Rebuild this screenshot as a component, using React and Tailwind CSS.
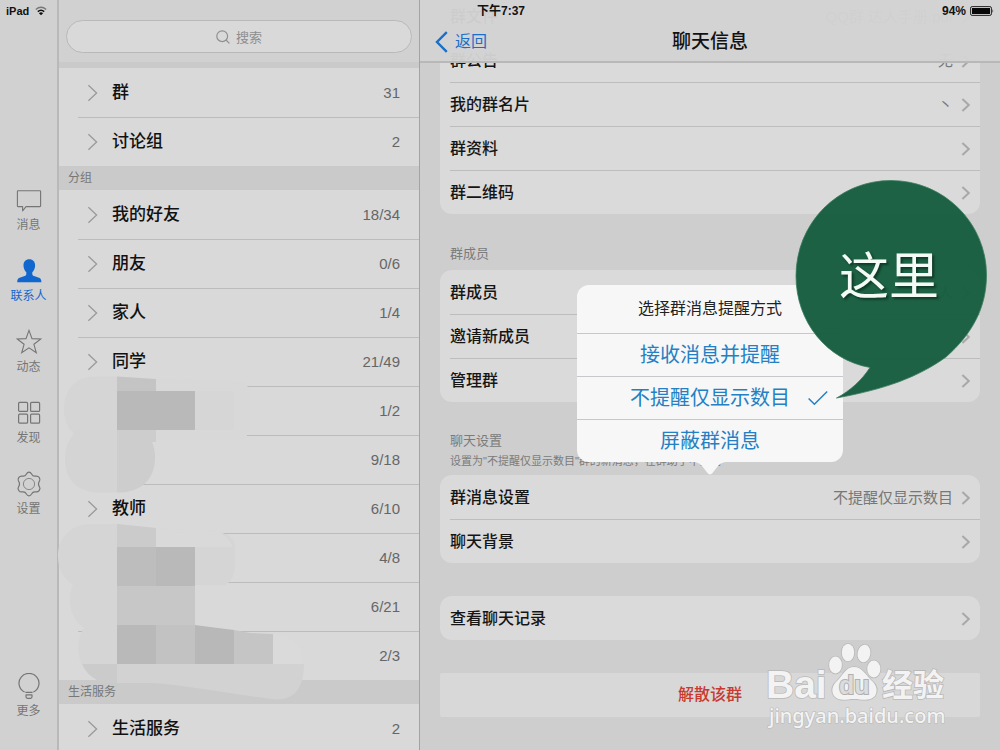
import React from "react";

const tabs = [
  { name: "消息", icon: MessageIcon },
  { name: "联系人", icon: PersonIcon, active: true },
  { name: "动态", icon: StarIcon },
  { name: "发现", icon: GridIcon },
  { name: "设置", icon: GearIcon },
];

const topGroups = [
  { name: "群", count: "31" },
  { name: "讨论组", count: "2" },
];

const friendGroups = [
  { name: "我的好友", count: "18/34" },
  { name: "朋友", count: "0/6" },
  { name: "家人", count: "1/4" },
  { name: "同学", count: "21/49" },
  { name: "", count: "1/2" },
  { name: "", count: "9/18" },
  { name: "教师", count: "6/10" },
  { name: "", count: "4/8" },
  { name: "", count: "6/21" },
  { name: "", count: "2/3" },
];

function MessageIcon() {
  return (
    <svg viewBox="0 0 26 26" className="size-[26px]" fill="none" stroke="currentColor" strokeWidth="1.1" strokeLinejoin="round">
      <path d="M2 3.8 H24 Q24.6 3.8 24.6 4.4 V19 Q24.6 19.6 24 19.6 H10 L6.6 23.8 V19.6 H2 Q1.4 19.6 1.4 19 V4.4 Q1.4 3.8 2 3.8 Z" />
    </svg>
  );
}

function PersonIcon() {
  return (
    <svg viewBox="0 0 26 26" className="size-[26px]" fill="currentColor">
      <path d="M13.3 1.2 C16.9 1.2 19.1 3.6 19.1 7.4 C19.1 10.2 18 12.6 16.3 14.3 V16 C16.3 17 16.9 17.6 18 18 L23 19.8 C24.6 20.4 25.4 21.8 25.4 24.2 H1.2 C1.2 21.8 2 20.4 3.6 19.8 L8.6 18 C9.7 17.6 10.3 17 10.3 16 V14.3 C8.6 12.6 7.5 10.2 7.5 7.4 C7.5 3.6 9.7 1.2 13.3 1.2 Z" />
    </svg>
  );
}

function StarIcon() {
  return (
    <svg viewBox="0 0 26 26" className="size-[26px]" fill="none" stroke="currentColor" strokeWidth="1.1" strokeLinejoin="miter">
      <path d="M13 1.4 L16 9.6 L24.8 9.9 L17.9 15.3 L20.3 23.8 L13 18.9 L5.7 23.8 L8.1 15.3 L1.2 9.9 L10 9.6 Z" />
    </svg>
  );
}

function GridIcon() {
  return (
    <svg viewBox="0 0 26 26" className="size-[26px]" fill="none" stroke="currentColor" strokeWidth="1.2">
      <rect x="2.6" y="2.4" width="9" height="9" rx="1" />
      <rect x="14.6" y="2.4" width="9" height="9" rx="1" />
      <rect x="2.6" y="14.2" width="9" height="9" rx="1" />
      <rect x="14.6" y="14.2" width="9" height="9" rx="1" />
    </svg>
  );
}

function GearIcon() {
  return (
    <svg viewBox="0 0 26 26" className="size-[26px]" fill="none" stroke="currentColor" strokeWidth="1.2" strokeLinejoin="round">
      <path d="M13 1.200 C14.600 1.200 15 2 15.700 3.200 C16.500 4.700 17.600 5.300 19.300 5.100 C21 4.900 22.200 4.900 23.100 6.300 C24.200 8 24.600 8.600 23.600 9.900 C22.300 11.700 22.300 14.300 23.600 16.100 C24.600 17.400 24.200 18 23.100 19.700 C22.200 21.100 21 21.100 19.300 20.900 C17.600 20.700 16.500 21.300 15.700 22.800 C15 24 14.600 24.800 13 24.800 C11.400 24.800 11 24 10.300 22.800 C9.500 21.300 8.400 20.700 6.700 20.900 C5 21.100 3.800 21.100 2.900 19.700 C1.800 18 1.400 17.400 2.400 16.100 C3.700 14.300 3.700 11.700 2.400 9.900 C1.400 8.600 1.800 8 2.900 6.300 C3.800 4.900 5 4.900 6.700 5.100 C8.400 5.300 9.500 4.700 10.300 3.200 C11 2 11.400 1.200 13 1.200 Z" />
      <circle cx="13" cy="13" r="5.600" strokeWidth="0.8" />
    </svg>
  );
}

function BulbIcon() {
  return (
    <svg viewBox="0 0 26 26" className="size-[26px]" fill="none" stroke="currentColor" strokeWidth="1.2">
      <path d="M8.600 19 A10 9.800 0 1 1 17.400 19" />
      <path d="M9.400 19.300 H16.600 M9.600 21.800 H16.400 M10 22 V23.800 Q10 25.300 11.500 25.300 H14.500 Q16 25.300 16 23.800 V22" />
    </svg>
  );
}

function Chevron() {
  return (
    <svg viewBox="0 0 10 14" className="h-3.5 w-2.5 shrink-0" fill="none" stroke="#a8a8a8" strokeWidth="2">
      <path d="M1.4 1 L7.8 7 L1.4 13" />
    </svg>
  );
}

function Tab({ name, icon: Icon, active }) {
  return (
    <button
      type="button"
      className={`flex w-full flex-col items-center gap-1 ${active ? "text-[#1267cf]" : "text-[#757575]"}`}
    >
      <Icon />
      <span className="text-xs leading-4">{name}</span>
    </button>
  );
}

function GroupRow({ name, count, first }) {
  return (
    <li className="pl-[19px]">
      <button
        type="button"
        className={`flex h-[49px] w-full items-center border-t pr-[19px] pl-[9px] ${first ? "border-transparent" : "border-[#bcbcbc]"}`}
      >
        {name && (
          <svg viewBox="0 0 11 18" className="mr-3.5 h-[18px] w-[11px]" fill="none" stroke="#9a9a9a" strokeWidth="1.3">
            <path d="M1.4 1.2 L9.6 9 L1.4 16.8" />
          </svg>
        )}
        <span className="text-[17px] leading-6 font-medium text-[#111]">{name}</span>
        <span className="ml-auto text-[15px] leading-5 text-[#666]">{count}</span>
      </button>
    </li>
  );
}

function GroupList({ groups }) {
  return (
    <ul>
      {groups.map((group, i) => (
        <GroupRow key={i} {...group} first={i === 0} />
      ))}
    </ul>
  );
}

function SectionTitle({ children }) {
  return <h2 className="h-6 bg-[#cacaca] px-[9px] text-xs leading-6 text-[#777]">{children}</h2>;
}

/* Pixelated strokes that hide private group names */
function Mosaic() {
  return (
    <svg viewBox="56 375 252 330" className="pointer-events-none absolute top-[375px] -left-[3px] h-[330px] w-[252px]" aria-hidden="true">
      <path fill="#d5d5d5" d="M117 376.5 H92 C74 378 64 392 64 408 C64 420 68 430 76 435 H117 Z" />
      <path fill="#c4c4c4" d="M117 376.5 L156 379 V391 H117 Z" />
      <path fill="#d8d8d8" d="M156 379 L240 381 Q250 384 250 396 V425 Q248 440 240 440 H156 Z" />
      <rect x="117" y="391" width="78" height="39" fill="#b9b9b9" />
      <rect x="195" y="391" width="39" height="39" fill="#d6d6d6" />
      <path fill="#d4d4d4" d="M117 430 H78 C69 437 65 447 65 460 C65 480 78 492 98 492.500 H117 Z" />
      <path fill="#cdcdcd" d="M117 430 H156 V442 H152 C154 447 155 451 155 458 C155 478 142 492 120 492.500 H117 Z" />
      <path fill="#d5d5d5" d="M117 524 H88 C68 526 58 540 58 556 C58 570 64 580 74 585 H225 Q235 580 235 564 V545 Q234 536 219 532 L156 528 Z" />
      <path fill="#cbcbcb" d="M117 524 L156 528 V547 H117 Z" />
      <path fill="#d9d9d9" d="M156 528 L219 532 Q228 536 233 547 H156 Z" />
      <rect x="117" y="547" width="39" height="39" fill="#bdbdbd" />
      <rect x="156" y="547" width="39" height="39" fill="#b9b9b9" />
      <path fill="#d5d5d5" d="M117 583 H74 C70 590 70 597 70 603 C71 615 76 622 84 628 C80 634 78 642 78 650 C79 656 80 661 82 665 H117 Z" />
      <rect x="117" y="586" width="78" height="39" fill="#c7c7c7" />
      <rect x="117" y="625" width="39" height="39" fill="#b9b9b9" />
      <rect x="156" y="625" width="39" height="39" fill="#c2c2c2" />
      <path fill="#b8b8b8" d="M195 625 L210 627 L234 630 V664 H195 Z" />
      <path fill="#c5c5c5" d="M234 630 L250 633 L273 634 V664 H234 Z" />
      <path fill="#dadada" d="M273 634 Q302 636 303 664 H273 Z" />
      <path fill="#cbcbcb" d="M82 664 H117 V683 H103 C93 679 86 673 82 664 Z" />
      <path fill="#d2d2d2" d="M117 664 H304 C304 688 294 700 276 699.500 C230 694 180 684 150 683 H117 Z" />
    </svg>
  );
}

function Card({ children }) {
  return <ul className="rounded-xl bg-[#dadada] pl-2.5">{children}</ul>;
}

function Row({ label, value, first }) {
  return (
    <li>
      <button
        type="button"
        className={`flex h-11 w-full items-center border-t pr-[9px] ${first ? "border-transparent" : "border-[#bdbdbd]"}`}
      >
        <span className="text-base leading-6 font-medium text-[#151515]">{label}</span>
        <span className="mr-2 ml-auto text-[15px] leading-5 text-[#777]">{value}</span>
        <Chevron />
      </button>
    </li>
  );
}

function Option({ children, checked }) {
  return (
    <button
      type="button"
      className="relative h-[43px] border-t border-[#c6c8cb] text-center text-xl leading-6 text-[#2480c4]"
    >
      {children}
      {checked && (
        <svg viewBox="0 0 20 16" className="absolute top-[13px] right-[15px] h-4 w-5" fill="none" stroke="currentColor" strokeWidth="1.5">
          <path d="M0.600 8.500 L6.400 14.300 L19.200 1.500" />
        </svg>
      )}
    </button>
  );
}

function Callout() {
  return (
    <svg viewBox="790 175 204 230" className="pointer-events-none absolute -top-[110px] left-[213px] h-[230px] w-[204px] max-w-none">
      <path
        d="M891 180.500 C944 180.500 986.500 223 986.500 275 C986.500 308 972 334 946 357 C918 377 886 389 836.500 398 C850 391 862 380 870 367.500 C827 360 796 322 796 276 C796 223 838 180.500 891 180.500 Z"
        fill="#185f41"
        fillOpacity="0.98"
        stroke="#3b7c60"
        strokeWidth="0.8"
      />
      <text
        x="839"
        y="294"
        fontSize="50"
        fill="#f4faf6"
        fontFamily="Noto Sans CJK SC, sans-serif"
        className="drop-shadow-[2px_2px_1px_rgba(8,40,26,0.7)]"
      >
        这里
      </text>
    </svg>
  );
}

function ModeMenu() {
  return (
    <div role="dialog" aria-label="选择群消息提醒方式" className="absolute top-[285px] left-1/2 w-[266px] -translate-x-1/2">
      <div className="flex flex-col rounded-xl bg-[#f7f7f7]">
        <h2 className="h-12 text-center text-base leading-[48px] text-[#222]">选择群消息提醒方式</h2>
        <Option>接收消息并提醒</Option>
        <Option checked>不提醒仅显示数目</Option>
        <Option>屏蔽群消息</Option>
      </div>
      <svg viewBox="0 0 36 13" className="mx-auto block h-[13px] w-9" fill="#f7f7f7">
        <path d="M0 0 H36 C30 0 28 2 26 4 L20.500 11 Q18 13.800 15.500 11 L10 4 C8 2 6 0 0 0 Z" />
      </svg>
      <Callout />
    </div>
  );
}

function Watermark() {
  return (
    <svg
      viewBox="760 638 192 94"
      className="pointer-events-none absolute top-[638px] right-12 h-[94px] w-48"
      fill="#f3f3f3"
      stroke="#b8b8b8"
      strokeWidth="1.6"
      paintOrder="stroke"
    >
      <text x="766" y="698" fontSize="39" fontWeight="700" fontFamily="Liberation Sans, Arial, sans-serif">Bai</text>
      <ellipse cx="835.500" cy="665" rx="6.400" ry="8.400" />
      <ellipse cx="848" cy="652.500" rx="6.200" ry="8.800" />
      <ellipse cx="864" cy="653.500" rx="6.400" ry="8.800" transform="rotate(10 864 653.500)" />
      <ellipse cx="873.800" cy="669" rx="6.600" ry="8.400" />
      <path d="M854 667 C862 667 866 675 871 680 C877 685 878 691 875 696 C870 702 861 699 854 699 C847 699 839 702 834 696 C831 691 832 685 838 680 C843 675 846 667 854 667 Z" />
      <text x="839" y="694" fontSize="25" fontWeight="700" fill="#dcdcdc" stroke="#b0b0b0" strokeWidth="2" fontFamily="Liberation Sans, Arial, sans-serif">du</text>
      <text x="882" y="696" fontSize="31" fontWeight="700" fontFamily="Noto Sans CJK SC, sans-serif">经验</text>
      <text x="769" y="723" fontSize="20" strokeWidth="1.2" fontWeight="500" fontFamily="Noto Sans, sans-serif">jingyan.baidu.com</text>
    </svg>
  );
}

export default function App() {
  return (
    <div className="flex h-screen w-full overflow-hidden bg-[#cecece] font-['Liberation_Sans','Noto_Sans_CJK_SC',sans-serif]">
      <nav className="flex w-[59px] shrink-0 flex-col border-r-2 border-[#b9b9b9] bg-[#d1d1d1]">
        <div className="flex h-[22px] items-center gap-1.5 pl-1.5 text-[11px] font-bold text-[#111]">
          iPad
          <svg viewBox="0 0 12 10" className="h-2.5 w-3" fill="none" stroke="#111" strokeWidth="1.6">
            <path d="M0.800 3.600 Q6 -1 11.200 3.600" stroke="#777" strokeWidth="1.300" />
            <path d="M2.800 5.700 Q6 2.800 9.200 5.700" />
            <path d="M6 9.200 L3.900 7.200 Q6 5.400 8.100 7.200 Z" fill="#111" stroke="none" />
          </svg>
        </div>
        <div className="mt-[165px] flex flex-col gap-[25px]">
          {tabs.map((tab) => (
            <Tab key={tab.name} {...tab} />
          ))}
        </div>
        <div className="mt-auto pb-[31px]">
          <Tab name="更多" icon={BulbIcon} />
        </div>
      </nav>

      <section className="relative w-[361px] shrink-0 border-r border-[#a3a3a3] bg-[#d9d9d9]">
        <header className="h-[62px] bg-[#d1d1d1] px-[7px] pt-5">
          <label className="flex h-[33px] items-center justify-center gap-1.5 rounded-full border border-[#b9b9b9] bg-[#d9d9d9]">
            <svg viewBox="0 0 14 14" className="size-3.5" fill="none" stroke="#909090" strokeWidth="1.2">
              <circle cx="6.200" cy="6.200" r="5.400" />
              <path d="M10 10 L13.400 13.400" />
            </svg>
            <input
              type="search"
              aria-label="搜索"
              placeholder="搜索"
              className="field-sizing-content min-w-[26px] bg-transparent text-[13px] leading-4 outline-none placeholder:text-[#8e8e8e]"
            />
          </label>
        </header>
        <div className="h-1.5 bg-[#cacaca]" />
        <GroupList groups={topGroups} />
        <SectionTitle>分组</SectionTitle>
        <GroupList groups={friendGroups} />
        <SectionTitle>生活服务</SectionTitle>
        <GroupList groups={[{ name: "生活服务", count: "2" }]} />
        <Mosaic />
      </section>

      <main className="relative min-w-0 flex-1">
        <div className="-mt-1.5 px-5">
          <Card>
            <Row label="群文件" value="QQ群 达人手册.pdf" first />
            <Row label="群公告" value="无" />
            <Row label="我的群名片" value="丶" />
            <Row label="群资料" />
            <Row label="群二维码" />
          </Card>
          <h2 className="px-2.5 pt-[30px] pb-1.5 text-[13px] leading-5 text-[#7b7b7b]">群成员</h2>
          <Card>
            <Row label="群成员" value="人" first />
            <Row label="邀请新成员" />
            <Row label="管理群" />
          </Card>
          <div className="px-2.5 pt-[27px] pb-[6px] text-[#7b7b7b]">
            <h2 className="text-[13px] leading-6">聊天设置</h2>
            <p className="truncate text-[11px] leading-4">设置为"不提醒仅显示数目"群的新消息，在群助手中查看</p>
          </div>
          <Card>
            <Row label="群消息设置" value="不提醒仅显示数目" first />
            <Row label="聊天背景" />
          </Card>
          <div className="pt-[33px]">
            <Card>
              <Row label="查看聊天记录" first />
            </Card>
          </div>
          <button type="button" className="mt-[33px] h-11 w-full rounded-xs bg-[#d8d8d8] text-base font-medium text-[#c8392f]">
            解散该群
          </button>
        </div>

        <header className="absolute inset-x-0 top-0 h-[63px] border-b-2 border-[#b8b8b8] bg-[#d3d3d3]/97">
          <div className="flex h-[22px] items-center justify-between pr-1.5 pl-[57px] text-xs font-bold text-[#111]">
            <time>下午7:37</time>
            <span className="flex items-center gap-1">
              94%
              <svg viewBox="0 0 24 10" className="h-2.5 w-6">
                <rect x="0.600" y="0.600" width="20.800" height="8.800" rx="1.500" fill="none" stroke="#222" strokeWidth="1" />
                <rect x="2" y="2" width="18" height="6" fill="#080808" />
                <path d="M22.500 3 Q24 5 22.500 7 Z" fill="#222" />
              </svg>
            </span>
          </div>
          <div className="grid grid-cols-3 items-center px-[15px] leading-10">
            <button type="button" className="flex items-center gap-[7px] text-base text-[#1a6fc9]">
              <svg viewBox="0 0 13 22" className="h-[22px] w-[13px]" fill="none" stroke="currentColor" strokeWidth="2.4">
                <path d="M11.800 1.200 L2 11 L11.800 20.800" />
              </svg>
              返回
            </button>
            <h1 className="text-center text-[19px] font-medium text-[#111]">聊天信息</h1>
          </div>
        </header>

        <ModeMenu />
        <Watermark />
      </main>
    </div>
  );
}
